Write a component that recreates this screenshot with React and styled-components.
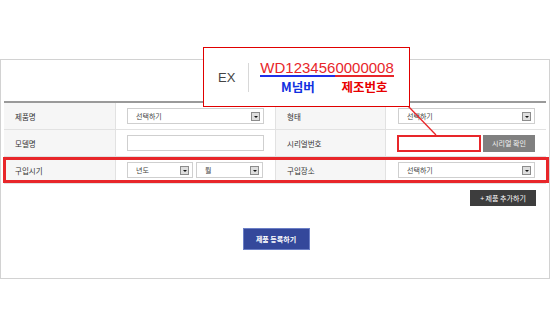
import React from "react";
import styled, { createGlobalStyle } from "styled-components";

const GlobalStyle = createGlobalStyle`
  body {
    margin: 0;
    background: #fff;
    font-family: "Noto Sans CJK KR", "Noto Sans", sans-serif;
  }
`;

const App = () => {
  return (
    <Page>
      <GlobalStyle />
      <Panel>
        <Table>
          <Row>
            <Label>제품명</Label>
            <Value>
              <Select $w={137}>
                선택하기
                <Arrow />
              </Select>
            </Value>
            <Label>형태</Label>
            <Value $pad={12}>
              <Select $w={137}>
                선택하기
                <Arrow />
              </Select>
            </Value>
          </Row>
          <Row>
            <Label>모델명</Label>
            <Value>
              <TextInput />
            </Value>
            <Label>시리얼번호</Label>
            <Value>
              <SerialInput />
              <GrayButton>시리얼 확인</GrayButton>
            </Value>
          </Row>
          <Row $highlight>
            <Label>구입시기</Label>
            <Value>
              <Select $w={66}>
                년도
                <Arrow />
              </Select>
              <Select $w={67}>
                월
                <Arrow />
              </Select>
            </Value>
            <Label>구입장소</Label>
            <Value $pad={12}>
              <Select $w={137}>
                선택하기
                <Arrow />
              </Select>
            </Value>
          </Row>
        </Table>
        <AddBar>
          <DarkButton>+ 제품 추가하기</DarkButton>
        </AddBar>
        <SubmitBar>
          <BlueButton>제품 등록하기</BlueButton>
        </SubmitBar>
      </Panel>

      <Connector width="50" height="50" viewBox="0 0 50 50">
        <line x1="8" y1="6" x2="36" y2="35" stroke="#e8262a" strokeWidth="1.3" />
      </Connector>

      <Callout>
        <Ex>EX</Ex>
        <Divider />
        <Serial>
          <Segment>
            <Digits $color="#1f2fe8">WD123456</Digits>
            <Caption $color="#1030e0">M넘버</Caption>
          </Segment>
          <Segment>
            <Digits $color="#e8262a">0000008</Digits>
            <Caption $color="#e80000">제조번호</Caption>
          </Segment>
        </Serial>
      </Callout>
    </Page>
  );
};

const Page = styled.div`
  position: relative;
  width: 550px;
  padding-top: 59px;
`;

const Panel = styled.section`
  box-sizing: border-box;
  width: 550px;
  border: 1px solid #d2d2d2;
  padding: 41px 3px 28px;
  display: flex;
  flex-direction: column;
`;

const Table = styled.div`
  border-top: 2px solid #9a9a9a;
`;

const Row = styled.div`
  position: relative;
  display: grid;
  grid-template-columns: 112px 160px 110px 1fr;
  height: 27px;
  box-sizing: border-box;
  border-bottom: 1px solid #e2e2e2;

  & > *:not(:last-child) {
    border-right: 1px solid #e2e2e2;
  }

  &::after {
    content: "";
    display: ${(p) => (p.$highlight ? "block" : "none")};
    position: absolute;
    top: 0;
    bottom: 0;
    left: -1px;
    right: -3px;
    border: 3px solid #e8262a;
    pointer-events: none;
  }
`;

const Label = styled.div`
  display: flex;
  align-items: center;
  padding-left: 11px;
  background: #f6f6f6;
  font-size: 7.5px;
  color: #333;
`;

const Value = styled.div`
  display: flex;
  align-items: center;
  gap: 3px;
  padding-left: ${(p) => p.$pad || 11}px;
`;

const Select = styled.div`
  box-sizing: border-box;
  width: ${(p) => p.$w}px;
  height: 16px;
  border: 1px solid #cfcfcf;
  display: flex;
  align-items: center;
  justify-content: space-between;
  padding: 0 3px 0 8px;
  font-size: 7px;
  color: #444;
  background: #fff;
`;

const Arrow = styled.span`
  position: relative;
  box-sizing: border-box;
  width: 9px;
  height: 9px;
  border: 1px solid #8c8c8c;
  background: #dedede;

  &::after {
    content: "";
    position: absolute;
    left: 2px;
    top: 3px;
    border-left: 2px solid transparent;
    border-right: 2px solid transparent;
    border-top: 2px solid #111;
  }
`;

const TextInput = styled.div`
  box-sizing: border-box;
  width: 137px;
  height: 16px;
  border: 1px solid #cfcfcf;
  background: #fff;
`;

const SerialInput = styled.div`
  box-sizing: border-box;
  width: 84px;
  height: 17px;
  border: 2px solid #e8262a;
  background: #fff;
`;

const GrayButton = styled.div`
  width: 52px;
  height: 17px;
  margin-left: -1px;
  background: #808080;
  color: #f2f2f2;
  font-size: 7px;
  display: flex;
  align-items: center;
  justify-content: center;
`;

const AddBar = styled.div`
  display: flex;
  justify-content: flex-end;
  padding: 6px 10px 0 0;
`;

const DarkButton = styled.div`
  width: 66px;
  height: 16px;
  background: #3d3d3d;
  color: #fff;
  font-size: 7px;
  display: flex;
  align-items: center;
  justify-content: center;
`;

const SubmitBar = styled.div`
  display: flex;
  justify-content: center;
  padding-top: 22px;
`;

const BlueButton = styled.div`
  box-sizing: border-box;
  width: 67px;
  height: 22px;
  margin-left: 2px;
  background: #34489b;
  border: 1px solid #6b7fc6;
  color: #fff;
  font-size: 7px;
  font-weight: 700;
  display: flex;
  align-items: center;
  justify-content: center;
`;

const Callout = styled.div`
  position: absolute;
  left: 203px;
  top: 47px;
  width: 207px;
  height: 60px;
  box-sizing: border-box;
  border: 1px solid #e00000;
  background: #fff;
  display: flex;
  align-items: center;
  padding-left: 14px;
`;

const Ex = styled.span`
  font-family: "Liberation Sans", Arial, sans-serif;
  font-size: 13px;
  color: #444;
`;

const Divider = styled.span`
  width: 1px;
  height: 29px;
  background: #d8d8d8;
  margin: 0 11px 0 13px;
`;

const Serial = styled.div`
  display: flex;
`;

const Segment = styled.div`
  display: flex;
  flex-direction: column;
  align-items: center;
`;

const Digits = styled.span`
  font-family: "Liberation Sans", Arial, sans-serif;
  font-size: 15px;
  line-height: 15px;
  color: #e8262a;
  border-bottom: 2px solid ${(p) => p.$color};
`;

const Caption = styled.span`
  margin-top: 3px;
  font-size: 12.5px;
  line-height: 14px;
  font-weight: 700;
  color: ${(p) => p.$color};
`;

const Connector = styled.svg`
  position: absolute;
  left: 400px;
  top: 100px;
`;

export default App;
